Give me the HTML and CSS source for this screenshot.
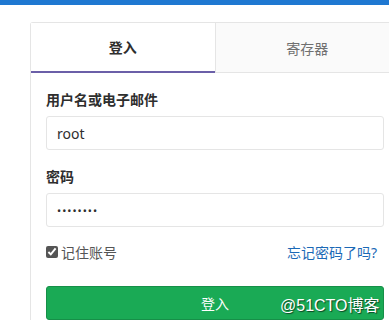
FILE: index.html
```html
<!DOCTYPE html>
<html lang="zh-CN">
<head>
    <meta charset="UTF-8">
    <meta name="viewport" content="width=device-width, initial-scale=1.0">
    <title>登入</title>
    <link rel="stylesheet" href="styles.css">
</head>
<body>
    <div class="topbar"></div>

    <div class="page">
        <div class="login-box">
            <!-- Tabs -->
            <div class="tabs">
                <div class="tab active">登入</div>
                <div class="tab">寄存器</div>
            </div>

            <!-- Sign in form -->
            <form class="login-form">
                <label class="field-label" for="login">用户名或电子邮件</label>
                <input class="field-input" type="text" id="login" value="root">

                <label class="field-label" for="password">密码</label>
                <input class="field-input" type="password" id="password" value="12345678">

                <div class="remember-row">
                    <label class="remember">
                        <input type="checkbox" checked>
                        <span>记住账号</span>
                    </label>
                    <a class="forgot" href="#">忘记密码了吗?</a>
                </div>

                <button class="submit-btn" type="button">登入</button>
            </form>
        </div>
    </div>

    <div class="watermark">@51CTO博客</div>
</body>
</html>
```

FILE: styles.css
```css
body {
    margin: 0;
    padding: 0;
    background: #fff;
    font-family: "Noto Sans", "Noto Sans CJK SC", sans-serif;
    font-size: 14px;
    color: #2e2e2e;
    overflow: hidden;
    height: 324px;
    position: relative;
}

.topbar {
    height: 5px;
    background: #1f78d1;
}

.page {
    padding: 17px 0 0 30px;
}

.login-box {
    width: 368px;
    border: 1px solid #e5e5e5;
    border-bottom: none;
    border-radius: 3px 3px 0 0;
}

/* Tabs */
.tabs {
    display: flex;
}

.tab {
    flex: 1;
    height: 49px;
    display: flex;
    align-items: center;
    justify-content: center;
    font-size: 14px;
    color: #707070;
    background: #fafafa;
    border-bottom: 1px solid #e5e5e5;
    border-left: 1px solid #e5e5e5;
}

.tab.active {
    color: #2e2e2e;
    font-weight: bold;
    background: #fff;
    border-left: none;
    border-bottom: 2px solid #6b5fa8;
    height: 48px;
}

/* Form */
.login-form {
    padding: 17px 15px 0;
    display: flex;
    flex-direction: column;
}

.field-label {
    font-weight: bold;
    line-height: 20px;
    margin-bottom: 6px;
}

.field-input {
    height: 34px;
    box-sizing: border-box;
    border: 1px solid #e5e5e5;
    border-radius: 3px;
    padding: 0 10px;
    font-family: inherit;
    font-size: 14px;
    color: #2e2e2e;
    margin-bottom: 17px;
    outline: none;
}

#password {
    margin-bottom: 15px;
    font-size: 11px;
    letter-spacing: 1px;
}

.remember-row {
    display: flex;
    justify-content: space-between;
    align-items: center;
    height: 20px;
    margin-bottom: 24px;
    padding-right: 7px;
}

.remember {
    display: flex;
    align-items: center;
    gap: 3px;
    color: #555;
}

.remember input {
    margin: 0;
    width: 12px;
    height: 12px;
    accent-color: #555;
}

.forgot {
    color: #1b69b6;
    text-decoration: none;
}

.submit-btn {
    height: 34px;
    border: 1px solid #168f48;
    border-radius: 3px;
    background: #1aaa55;
    color: #fff;
    font-family: inherit;
    font-size: 14px;
    cursor: pointer;
}

.watermark {
    position: absolute;
    left: 280px;
    top: 292px;
    color: #fff;
    font-family: "Liberation Sans", "Noto Sans CJK SC", sans-serif;
    font-size: 16px;
    text-shadow: 1px 1px 1px rgba(0, 0, 0, 0.6);
}
```
